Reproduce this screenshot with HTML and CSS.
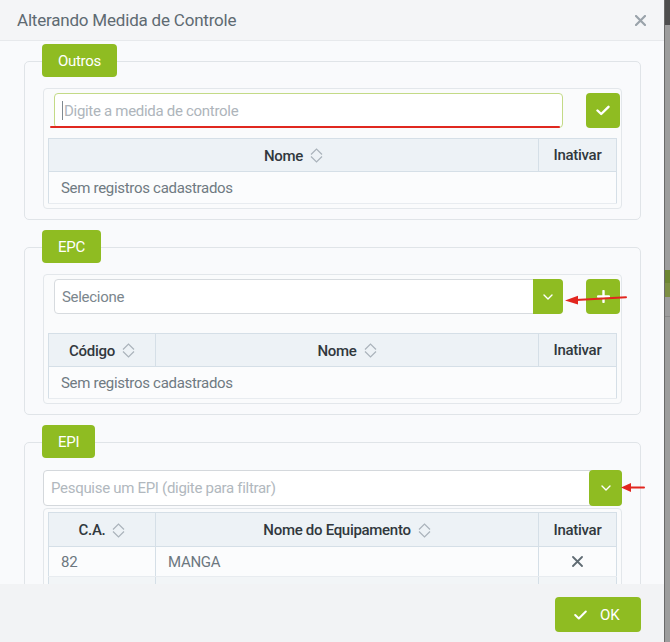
FILE: index.html
```html
<!DOCTYPE html>
<html lang="pt-BR">
<head>
<meta charset="utf-8">
<title>Alterando Medida de Controle</title>
<link rel="stylesheet" href="styles.css">
</head>
<body>
<div class="screen">
  <div class="modal">
    <header class="modal-header">
      <h1 class="modal-title">Alterando Medida de Controle</h1>
      <button class="close" aria-label="Fechar">
        <svg width="11" height="11" viewBox="0 0 11 11"><path d="M1 1 L10 10 M10 1 L1 10" stroke="#9aa3aa" stroke-width="2.2" stroke-linecap="round" fill="none"/></svg>
      </button>
    </header>

    <div class="modal-body">
      <!-- Outros -->
      <section class="group">
        <div class="badge">Outros</div>
        <div class="box">
          <div class="panel">
            <div class="input-row">
              <div class="text-input focus">
                <span class="caret"></span>
                <span class="placeholder">Digite a medida de controle</span>
              </div>
              <button class="btn-square" aria-label="Confirmar">
                <svg width="14" height="11" viewBox="0 0 14 11"><path d="M1.5 5.5 L5.2 9 L12.5 1.8" stroke="#fff" stroke-width="2.4" stroke-linecap="round" stroke-linejoin="round" fill="none"/></svg>
              </button>
              <span class="annot-underline"></span>
            </div>
            <table class="grid">
              <colgroup><col><col class="col-inativar"></colgroup>
              <thead>
                <tr>
                  <th><span class="th-label">Nome<svg class="sort" width="13" height="15" viewBox="0 0 13 15"><path d="M1 6.5 L6.5 1 L12 6.5 M1 8.5 L6.5 14 L12 8.5" stroke="#aab3bb" stroke-width="1.2" fill="none"/></svg></span></th>
                  <th>Inativar</th>
                </tr>
              </thead>
              <tbody>
                <tr><td colspan="2" class="empty">Sem registros cadastrados</td></tr>
              </tbody>
            </table>
          </div>
        </div>
      </section>

      <!-- EPC -->
      <section class="group">
        <div class="badge">EPC</div>
        <div class="box">
          <div class="panel">
            <div class="input-row select-row">
              <div class="select">
                <span class="select-value">Selecione</span>
                <span class="dd">
                  <svg width="10" height="6" viewBox="0 0 10 6"><path d="M1 1 L5 5 L9 1" stroke="#fff" stroke-width="1.4" stroke-linecap="round" stroke-linejoin="round" fill="none"/></svg>
                </span>
              </div>
              <button class="btn-square" aria-label="Adicionar">
                <svg width="13" height="13" viewBox="0 0 13 13"><path d="M6.5 1 V12 M1 6.5 H12" stroke="#fff" stroke-width="2.4" stroke-linecap="round" fill="none"/></svg>
              </button>
              <svg class="annot-arrow-epc" width="62" height="13" viewBox="0 0 62 13"><path d="M11 7 L61 4.2" stroke="#e2261f" stroke-width="2" stroke-linecap="round" fill="none"/><polygon points="0,7.4 13,2.8 13,11.6" fill="#e2261f"/></svg>
            </div>
            <table class="grid">
              <colgroup><col class="col-code"><col><col class="col-inativar"></colgroup>
              <thead>
                <tr>
                  <th><span class="th-label">Código<svg class="sort" width="13" height="15" viewBox="0 0 13 15"><path d="M1 6.5 L6.5 1 L12 6.5 M1 8.5 L6.5 14 L12 8.5" stroke="#aab3bb" stroke-width="1.2" fill="none"/></svg></span></th>
                  <th><span class="th-label">Nome<svg class="sort" width="13" height="15" viewBox="0 0 13 15"><path d="M1 6.5 L6.5 1 L12 6.5 M1 8.5 L6.5 14 L12 8.5" stroke="#aab3bb" stroke-width="1.2" fill="none"/></svg></span></th>
                  <th>Inativar</th>
                </tr>
              </thead>
              <tbody>
                <tr><td colspan="3" class="empty">Sem registros cadastrados</td></tr>
              </tbody>
            </table>
          </div>
        </div>
      </section>

      <!-- EPI -->
      <section class="group">
        <div class="badge">EPI</div>
        <div class="box box-epi">
          <div class="combo">
            <span class="placeholder">Pesquise um EPI (digite para filtrar)</span>
            <span class="combo-btn">
              <svg width="10" height="6" viewBox="0 0 10 6"><path d="M1 1 L5 5 L9 1" stroke="#fff" stroke-width="1.4" stroke-linecap="round" stroke-linejoin="round" fill="none"/></svg>
            </span>
            <svg class="annot-arrow-epi" width="24" height="11" viewBox="0 0 24 11"><path d="M9 5.5 L23 5.5" stroke="#e2261f" stroke-width="2" stroke-linecap="round" fill="none"/><polygon points="0,5.5 10,1 10,10" fill="#e2261f"/></svg>
          </div>
          <div class="panel panel-epi">
            <table class="grid grid-epi">
              <colgroup><col class="col-code"><col><col class="col-inativar"></colgroup>
              <thead>
                <tr>
                  <th><span class="th-label">C.A.<svg class="sort" width="13" height="15" viewBox="0 0 13 15"><path d="M1 6.5 L6.5 1 L12 6.5 M1 8.5 L6.5 14 L12 8.5" stroke="#aab3bb" stroke-width="1.2" fill="none"/></svg></span></th>
                  <th><span class="th-label">Nome do Equipamento<svg class="sort" width="13" height="15" viewBox="0 0 13 15"><path d="M1 6.5 L6.5 1 L12 6.5 M1 8.5 L6.5 14 L12 8.5" stroke="#aab3bb" stroke-width="1.2" fill="none"/></svg></span></th>
                  <th>Inativar</th>
                </tr>
              </thead>
              <tbody>
                <tr>
                  <td>82</td>
                  <td>MANGA</td>
                  <td class="center"><svg width="11" height="11" viewBox="0 0 11 11"><path d="M1 1 L10 10 M10 1 L1 10" stroke="#5f6b73" stroke-width="1.8" stroke-linecap="round" fill="none"/></svg></td>
                </tr>
                <tr class="alt">
                  <td>&nbsp;</td>
                  <td>&nbsp;</td>
                  <td>&nbsp;</td>
                </tr>
              </tbody>
            </table>
          </div>
        </div>
      </section>
    </div>

    <footer class="modal-footer">
      <button class="btn-ok">
        <svg width="13" height="10" viewBox="0 0 13 10"><path d="M1.2 5 L4.8 8.5 L11.8 1.5" stroke="#fff" stroke-width="2" stroke-linecap="round" stroke-linejoin="round" fill="none"/></svg>
        <span>OK</span>
      </button>
    </footer>
  </div>
  <div class="backdrop"></div>
</div>
</body>
</html>
```

FILE: styles.css
```css
html, body {
  margin: 0;
  padding: 0;
}

body {
  width: 670px;
  height: 642px;
  overflow: hidden;
  font-family: Roboto, "Liberation Sans", sans-serif;
  font-size: 15px;
  color: #333a3f;
}

.screen {
  display: flex;
  height: 642px;
}

.modal {
  width: 664px;
  display: flex;
  flex-direction: column;
  background: #f9fafc;
}

.backdrop {
  flex: 1;
  border-left: 1px solid #6a6a6a;
  background: linear-gradient(to bottom,
    #4e4e4e 0, #4e4e4e 25px,
    #9d9d9d 25px, #9d9d9d 270px,
    #6d8632 270px, #6d8632 283px,
    #7d8f44 283px, #7d8f44 297px,
    #9d9d9d 297px, #9d9d9d 316px,
    #8a8a8a 316px, #8a8a8a 317px,
    #9d9d9d 317px);
}

/* header */
.modal-header {
  height: 40px;
  flex: none;
  display: flex;
  align-items: center;
  justify-content: space-between;
  padding: 0 18px 0 17px;
  background: #f4f5f7;
  border-bottom: 1px solid #e7e9ec;
}

.modal-title {
  margin: 0;
  font-size: 17px;
  font-weight: 400;
  color: #5e6a72;
  letter-spacing: -0.2px;
}

.close {
  border: 0;
  padding: 0;
  background: none;
  width: 11px;
  height: 11px;
  display: flex;
}

/* body */
.modal-body {
  flex: 1;
  overflow: hidden;
  padding: 3px 23px 0 24px;
  letter-spacing: -0.3px;
}

.group {
  margin-bottom: 10px;
}

.badge {
  display: flex;
  align-items: center;
  width: max-content;
  height: 33px;
  padding: 0 16px;
  margin: 0 0 -16px 18px;
  background: #8fbc22;
  color: #fff;
  border-radius: 4px;
  font-size: 15px;
  position: relative;
  z-index: 1;
}

.box {
  border: 1px solid #e0e4e8;
  border-radius: 5px;
  padding: 26px 18px 10px;
}

.box-epi {
  padding-top: 27px;
}

.panel {
  border: 1px solid #e3e7eb;
  border-radius: 4px;
  padding: 4px;
  background: #fafbfc;
}

.panel-epi {
  margin-top: 2px;
  padding-top: 3px;
}

.input-row {
  position: relative;
  display: flex;
  gap: 23px;
  height: 35px;
  margin: 0 -3px 10px 6px;
}

.select-row {
  margin-bottom: 19px;
}

.text-input {
  flex: 1;
  display: flex;
  align-items: center;
  background: #fff;
  border: 1px solid #c3da86;
  border-radius: 4px;
  padding-left: 7px;
}

.caret {
  width: 1px;
  height: 19px;
  background: #7f8990;
  margin-right: 1px;
}

.placeholder {
  color: #aeb5bb;
}

.btn-square {
  width: 34px;
  flex: none;
  border: 0;
  padding: 0;
  border-radius: 4px;
  background: #8fbc22;
  display: flex;
  align-items: center;
  justify-content: center;
}

.annot-underline {
  position: absolute;
  left: -4px;
  top: 33px;
  width: 510px;
  height: 2px;
  border-radius: 1px;
  background: #e0281f;
}

.select {
  flex: 1;
  display: flex;
  background: #fff;
  border: 1px solid #d7dbdf;
  border-radius: 4px;
}

.select-value {
  flex: 1;
  display: flex;
  align-items: center;
  padding-left: 7px;
  color: #7b868d;
}

.dd {
  width: 30px;
  margin: -1px -1px -1px 0;
  background: #8fbc22;
  border-radius: 0 4px 4px 0;
  display: flex;
  align-items: center;
  justify-content: center;
}

.annot-arrow-epc {
  position: absolute;
  left: 511px;
  top: 14px;
}

.combo {
  position: relative;
  display: flex;
  height: 34px;
  background: #fff;
  border: 1px solid #d4d8dc;
  border-radius: 4px;
}

.combo .placeholder {
  flex: 1;
  display: flex;
  align-items: center;
  padding-left: 7px;
  color: #b1b8be;
}

.combo-btn {
  width: 33px;
  margin: -1px -1px -1px 0;
  background: #8fbc22;
  border-radius: 4px;
  display: flex;
  align-items: center;
  justify-content: center;
}

.annot-arrow-epi {
  position: absolute;
  left: 100%;
  top: 11px;
}

/* tables */
.grid {
  width: 100%;
  border-collapse: collapse;
  table-layout: fixed;
  border: 1px solid #d5dfe7;
}

.col-code {
  width: 107px;
}

.col-inativar {
  width: 78px;
}

.grid th {
  height: 32px;
  padding: 0;
  background: #edf2f6;
  border: 1px solid #d5dfe7;
  font-weight: 500;
  color: #31383d;
  text-align: center;
  font-size: 15px;
}

.grid-epi th {
  height: 33px;
}

.th-label {
  display: inline-flex;
  align-items: center;
  gap: 7px;
  vertical-align: middle;
}

.grid td {
  height: 31px;
  padding: 0 12px;
  background: #fbfcfd;
  border-left: 1px solid #d5dfe7;
  border-right: 1px solid #d5dfe7;
  border-bottom: 1px solid #e8ecf0;
  color: #6c777f;
}

.grid-epi td {
  height: 29px;
}

.grid td.empty {
  color: #6f7a82;
}

.grid td.center {
  text-align: center;
  line-height: 0;
}

.grid tr.alt td {
  background: #f2f5f7;
}

/* footer */
.modal-footer {
  flex: none;
  height: 58px;
  box-sizing: border-box;
  padding: 13px 23px 0 0;
  display: flex;
  justify-content: flex-end;
  align-items: flex-start;
  background: #f2f3f5;
}

.btn-ok {
  width: 86px;
  height: 35px;
  border: 0;
  border-radius: 4px;
  background: #8fbc22;
  color: #fff;
  display: flex;
  align-items: center;
  gap: 13px;
  padding: 0 0 0 19px;
  font-family: Roboto, "Liberation Sans", sans-serif;
  font-size: 15px;
}
```
